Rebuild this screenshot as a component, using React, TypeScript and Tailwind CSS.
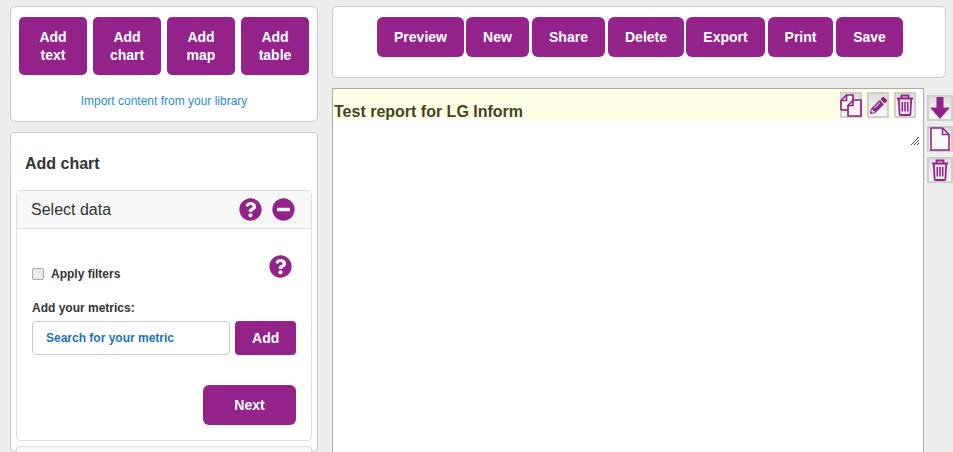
import type { ReactNode } from "react";
import { FaMinusCircle, FaPencilAlt, FaQuestionCircle } from "react-icons/fa";

const purple = "bg-[#93238a]";

function HelpIcon() {
  return <FaQuestionCircle size={23} className="text-[#93238a]" />;
}

function CopyIcon() {
  return (
    <svg className="shrink-0" width="22" height="23" viewBox="0 0 22 23" fill="none" stroke="#93238a" strokeWidth="1.7">
      <path d="M1 16V6.5L6.5 1H13v5" fill="#fbf8fb" />
      <path d="M1 16h7" />
      <path d="M6.5 1v5.5H1" />
      <path d="M8 22V11.5L13 6h8v16z" fill="#f6f2f6" />
      <path d="M13 6v5.5H8" />
    </svg>
  );
}

function TrashIcon() {
  return (
    <svg className="shrink-0" width="18" height="22" viewBox="0 0 18 22" fill="none" stroke="#93238a" strokeWidth="1.8">
      <path d="M1 4.5h16" strokeWidth="2" />
      <path d="M5.5 4V1.5h7V4" />
      <path d="M2.8 4.5l.8 15.5a1 1 0 0 0 1 1h8.8a1 1 0 0 0 1-1l.8-15.5" />
      <path d="M6.3 8v9.5M9 8v9.5M11.7 8v9.5" strokeWidth="1.6" />
    </svg>
  );
}

function ArrowIcon() {
  return (
    <svg className="shrink-0" width="22" height="24" viewBox="0 0 22 24">
      <path d="M7.5 1h7v10.5H21L11 23 1 11.5h6.5z" fill="#93238a" />
    </svg>
  );
}

function PageIcon() {
  return (
    <svg className="shrink-0" width="20" height="24" viewBox="0 0 20 24" fill="#fafafa" stroke="#93238a" strokeWidth="1.6">
      <path d="M1 1h11.5L19 7.5V23H1z" />
      <path d="M12.5 1v6.5H19" fill="none" />
    </svg>
  );
}

function Tile({ className, children }: { className: string; children: ReactNode }) {
  return (
    <div className={`flex items-center justify-center border-2 border-[#cfcfcf] bg-gradient-to-b from-[#dedede] to-[#fbfbfb] ${className}`}>
      {children}
    </div>
  );
}

export default function App() {
  const addButtons = [
    ["Add", "text"],
    ["Add", "chart"],
    ["Add", "map"],
    ["Add", "table"],
  ];
  const toolbar = [
    ["Preview", "w-[87px]", "mr-[2px]"],
    ["New", "w-[63px]", "mr-[3px]"],
    ["Share", "w-[73px]", "mr-[3px]"],
    ["Delete", "w-[76px]", "mr-[2px]"],
    ["Export", "w-[79px]", "mr-[3px]"],
    ["Print", "w-[65px]", "mr-[3px]"],
    ["Save", "w-[67px]", ""],
  ];

  return (
    <div className="w-[953px] h-[452px] overflow-hidden bg-[#eeeeee] flex font-['Liberation_Sans',Arial,sans-serif] text-[#333333]">
      <div className="w-[308px] ml-[10px] pt-[6px] flex flex-col gap-[10px] shrink-0">
        <div className="h-[116px] shrink-0 bg-white border border-[#cccccc] rounded-[5px] px-[8px] pt-[10px]">
          <div className="flex gap-[6px]">
            {addButtons.map((b) => (
              <div key={b[1]} className={`w-[68px] h-[58px] ${purple} rounded-[5px] text-white font-bold text-[14px] leading-[18px] flex flex-col items-center justify-center`}>
                <span>{b[0]}</span>
                <span>{b[1]}</span>
              </div>
            ))}
          </div>
          <div className="mt-[17px] text-center text-[12px] leading-[18px] text-[#2a8fcb]">
            Import content from your library
          </div>
        </div>

        <div className="h-[320px] shrink-0 bg-white border border-[#cccccc] rounded-[5px] px-[5px]">
          <h2 className="pt-[21px] pl-[9px] text-[16px] leading-[20px] font-bold">Add chart</h2>
          <div className="mt-[16px] h-[251px] border border-[#dddddd] rounded-[4px]">
            <div className="h-[38px] bg-[#f7f7f7] border-b border-[#dddddd] rounded-t-[4px] pl-[14px] pr-[16px] flex items-center justify-between">
              <span className="text-[16px]">Select data</span>
              <div className="flex gap-[10px]">
                <HelpIcon />
                <FaMinusCircle size={23} className="text-[#93238a]" />
              </div>
            </div>
            <div className="px-[15px]">
              <div className="pt-[26px] flex justify-between pr-[4px]">
                <label className="flex items-center gap-[7px] pt-[10px] text-[12px] leading-[18px] font-bold">
                  <span className="w-[12px] h-[12px] rounded-[2px] border border-[#a8a8a8] bg-[#ececec] block" />
                  Apply filters
                </label>
                <HelpIcon />
              </div>
              <div className="mt-[17px] text-[12px] leading-[16px] font-bold">Add your metrics:</div>
              <div className="mt-[5px] flex gap-[5px]">
                <div className="w-[199px] h-[34px] border border-[#cccccc] rounded-[4px] pl-[13px] flex items-center text-[12px] font-bold text-[#1675b5]">
                  Search for your metric
                </div>
                <div className={`w-[61px] h-[34px] ${purple} rounded-[4px] text-white font-bold text-[14px] flex items-center justify-center`}>
                  Add
                </div>
              </div>
              <div className="mt-[30px] flex justify-end">
                <div className={`w-[93px] h-[40px] ${purple} rounded-[6px] text-white font-bold text-[14px] flex items-center justify-center`}>
                  Next
                </div>
              </div>
            </div>
          </div>
          <div className="mt-[5px] h-[20px] border border-[#dddddd] rounded-t-[4px] bg-[#f7f7f7]" />
        </div>
      </div>

      <div className="ml-[14px] pt-[6px] flex-1 min-w-0">
        <div className="w-[614px] h-[72px] bg-white border border-[#cccccc] rounded-[5px] pl-[44px] pt-[10px] flex">
          {toolbar.map(([label, w, m]) => (
            <div key={label} className={`${w} ${m} h-[40px] ${purple} rounded-[6px] text-white font-bold text-[14px] flex items-center justify-center`}>
              {label}
            </div>
          ))}
        </div>
        <div className="mt-[10px] flex">
          <div className="relative w-[592px] h-[370px] bg-white border border-[#aaaaaa] border-b-0">
            <div className="h-[30px] w-[583px] bg-[#ffffe6] pl-[1px] pt-[13px] text-[16px] leading-[20px] font-bold text-[#444422]">
              Test report for LG Inform
            </div>
            <div className="absolute top-[3px] left-[507px] flex gap-[5px]">
              <Tile className="w-[22px] h-[26px]"><CopyIcon /></Tile>
              <Tile className="w-[22px] h-[26px]"><FaPencilAlt size={17} className="text-[#93238a]" /></Tile>
              <Tile className="w-[22px] h-[26px]"><TrashIcon /></Tile>
            </div>
            <svg className="absolute top-[48px] left-[578px]" width="8" height="8" viewBox="0 0 8 8" stroke="#444" strokeWidth="1">
              <path d="M0 8L8 0M3 8l5-5M6 8l2-2" />
            </svg>
          </div>
          <div className="ml-[3px] pt-[7px] flex flex-col gap-[5px]">
            <Tile className="w-[26px] h-[26px]"><ArrowIcon /></Tile>
            <Tile className="w-[26px] h-[26px]"><PageIcon /></Tile>
            <Tile className="w-[26px] h-[26px]"><TrashIcon /></Tile>
          </div>
        </div>
      </div>
    </div>
  );
}
